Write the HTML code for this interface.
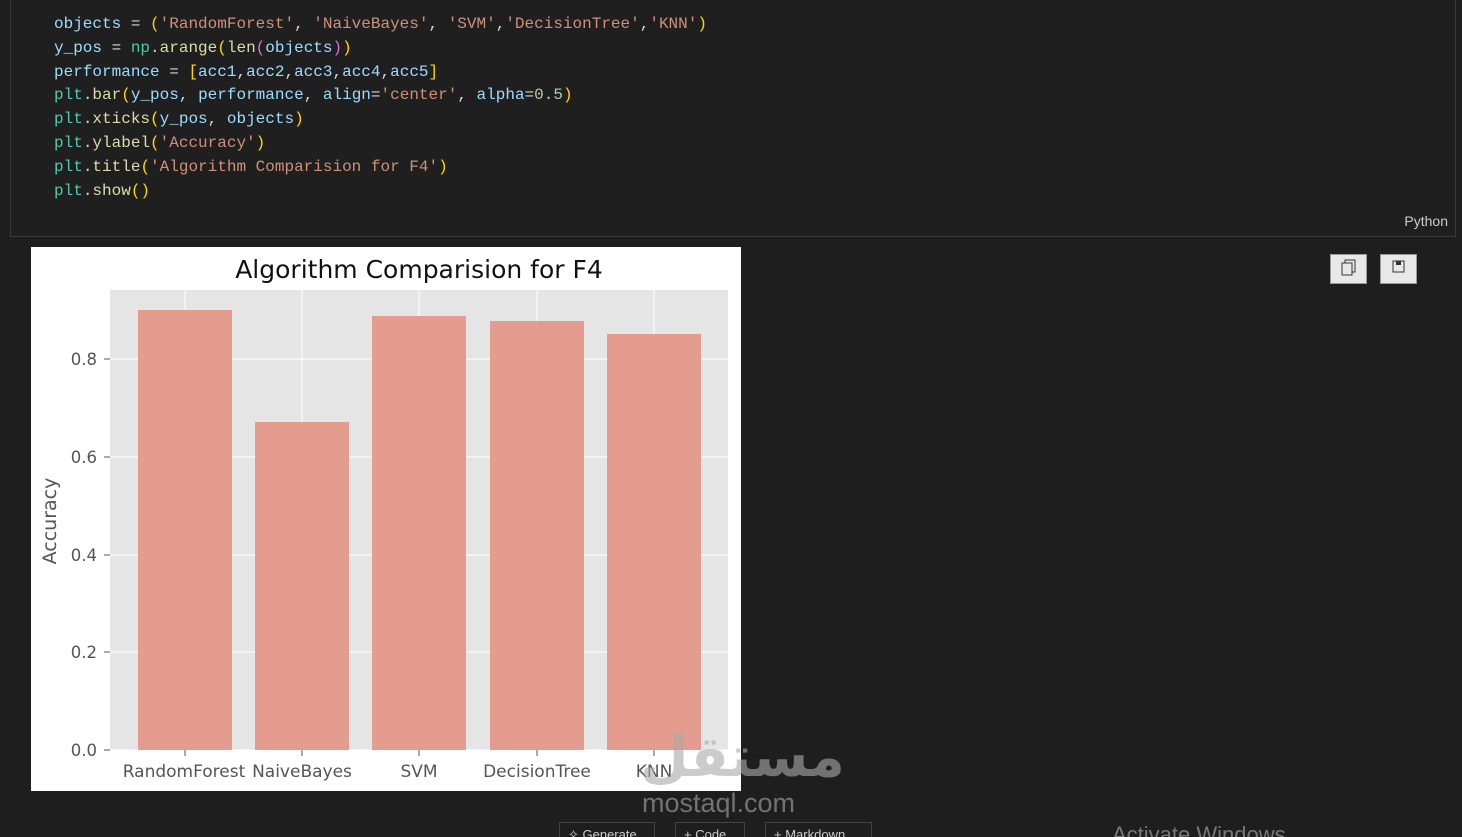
<!DOCTYPE html>
<html style="overflow:hidden"><head><style>
html,body{overflow:hidden}
body{margin:0;width:1462px;height:837px;background:#1e1e1e;position:relative;overflow:hidden;font-family:"Liberation Sans",sans-serif}
.cell{position:absolute;left:10px;top:-1px;width:1444px;height:236px;border:1px solid #3a3a3a;background:#1f1f1f}
pre{position:absolute;left:54px;top:13px;margin:0;font:16px/23.8px "Liberation Mono",monospace;color:#d4d4d4}
.v{color:#9cdcfe}.s{color:#ce9178}.f{color:#dcdcaa}.m{color:#4ec9b0}.y{color:#ffd700}.p{color:#da70d6}.n{color:#b5cea8}
.py{position:absolute;right:14px;top:213px;color:#ccc;font-size:14px}
.btn{position:absolute;top:254px;width:37px;height:30px;background:#e8e8e8;border:1px solid #999;box-sizing:border-box}
.tb{position:absolute;top:822px;height:20px;border:1px solid #444;color:#ccc;font-size:13px;padding:4px 8px;box-sizing:border-box}
</style></head><body>
<div class="cell"></div>
<pre><span class="v">objects</span> = <span class="y">(</span><span class="s">'RandomForest'</span>, <span class="s">'NaiveBayes'</span>, <span class="s">'SVM'</span>,<span class="s">'DecisionTree'</span>,<span class="s">'KNN'</span><span class="y">)</span>
<span class="v">y_pos</span> = <span class="m">np</span>.<span class="f">arange</span><span class="y">(</span><span class="f">len</span><span class="p">(</span><span class="v">objects</span><span class="p">)</span><span class="y">)</span>
<span class="v">performance</span> = <span class="y">[</span><span class="v">acc1</span>,<span class="v">acc2</span>,<span class="v">acc3</span>,<span class="v">acc4</span>,<span class="v">acc5</span><span class="y">]</span>
<span class="m">plt</span>.<span class="f">bar</span><span class="y">(</span><span class="v">y_pos</span>, <span class="v">performance</span>, <span class="v">align</span>=<span class="s">'center'</span>, <span class="v">alpha</span>=<span class="n">0.5</span><span class="y">)</span>
<span class="m">plt</span>.<span class="f">xticks</span><span class="y">(</span><span class="v">y_pos</span>, <span class="v">objects</span><span class="y">)</span>
<span class="m">plt</span>.<span class="f">ylabel</span><span class="y">(</span><span class="s">'Accuracy'</span><span class="y">)</span>
<span class="m">plt</span>.<span class="f">title</span><span class="y">(</span><span class="s">'Algorithm Comparision for F4'</span><span class="y">)</span>
<span class="m">plt</span>.<span class="f">show</span><span class="y">()</span></pre>
<div class="py">Python</div>
<svg style="position:absolute;left:31px;top:247px" width="710" height="544" viewBox="31 247 710 544">
<rect x="31" y="247" width="710" height="544" fill="#fff"/>
<rect x="110" y="290" width="618" height="460" fill="#e5e5e5"/>
<g stroke="#fff" stroke-width="1">
<line x1="110" x2="728" y1="750" y2="750"/><line x1="110" x2="728" y1="652" y2="652"/><line x1="110" x2="728" y1="555" y2="555"/><line x1="110" x2="728" y1="457" y2="457"/><line x1="110" x2="728" y1="359" y2="359"/>
<line x1="185" x2="185" y1="290" y2="750"/><line x1="302" x2="302" y1="290" y2="750"/><line x1="419" x2="419" y1="290" y2="750"/><line x1="537" x2="537" y1="290" y2="750"/><line x1="654" x2="654" y1="290" y2="750"/>
</g>
<g fill="#e3998a" fill-opacity="0.97">
<rect x="138" y="310" width="94" height="440"/><rect x="255" y="422" width="94" height="328"/><rect x="372" y="316" width="94" height="434"/><rect x="490" y="321" width="94" height="429"/><rect x="607" y="334" width="94" height="416"/>
</g>
<g stroke="#555"><line x1="104" x2="110" y1="750" y2="750"/><line x1="104" x2="110" y1="652" y2="652"/><line x1="104" x2="110" y1="555" y2="555"/><line x1="104" x2="110" y1="457" y2="457"/><line x1="104" x2="110" y1="359" y2="359"/>
<line x1="185" x2="185" y1="750" y2="756"/><line x1="302" x2="302" y1="750" y2="756"/><line x1="419" x2="419" y1="750" y2="756"/><line x1="537" x2="537" y1="750" y2="756"/><line x1="654" x2="654" y1="750" y2="756"/></g>
<g fill="#555" font-family="DejaVu Sans" font-size="16.5" text-anchor="end">
<text x="97" y="756">0.0</text><text x="97" y="658">0.2</text><text x="97" y="561">0.4</text><text x="97" y="463">0.6</text><text x="97" y="365">0.8</text></g>
<g fill="#555" font-family="DejaVu Sans" font-size="17" text-anchor="middle">
<text x="184" y="777">RandomForest</text><text x="302" y="777">NaiveBayes</text><text x="419" y="777">SVM</text><text x="537" y="777">DecisionTree</text><text x="654" y="777">KNN</text>
<text transform="translate(56,521) rotate(-90)" font-size="19">Accuracy</text>
<text x="419" y="278" font-size="25" fill="#111">Algorithm Comparision for F4</text></g>
</svg>
<div class="btn" style="left:1330px"></div><div class="btn" style="left:1380px"></div>
<svg style="position:absolute;left:1341px;top:259px" width="16" height="18"><rect x="4" y="1" width="10" height="12" fill="none" stroke="#333"/><rect x="1" y="4" width="10" height="12" fill="#e8e8e8" stroke="#333"/></svg>
<svg style="position:absolute;left:1392px;top:260px" width="14" height="14"><rect x="1" y="1" width="11" height="11" fill="none" stroke="#333"/><rect x="4" y="1" width="5" height="4" fill="#333"/></svg>
<div style="position:absolute;left:642px;top:788px;color:#888;font-size:27px;opacity:.8">mostaql.com</div>
<div style="position:absolute;left:640px;top:725px;color:#aaa;font-size:56px;font-weight:bold;opacity:.6;font-family:'DejaVu Sans',sans-serif">مستقل</div>
<div class="tb" style="left:559px;width:96px">✧ Generate</div>
<div class="tb" style="left:675px;width:70px">+ Code</div>
<div class="tb" style="left:765px;width:107px">+ Markdown</div>
<div style="position:absolute;left:1112px;top:822px;color:#777;font-size:22px">Activate Windows</div>
</body></html>
